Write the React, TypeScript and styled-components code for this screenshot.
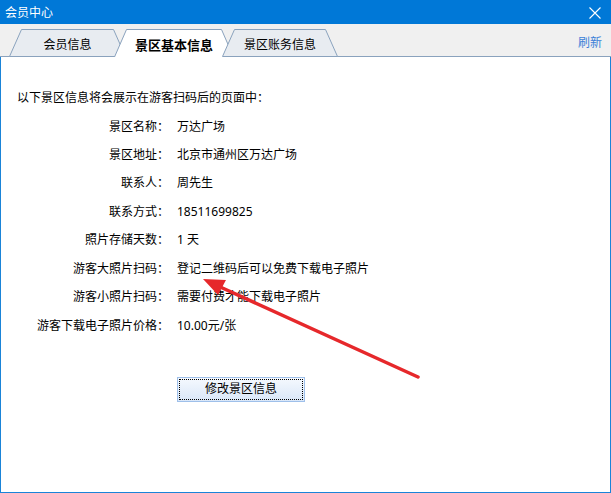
import React from "react";
import styled, { createGlobalStyle } from "styled-components";

const FONT = `"Noto Sans", "Noto Sans CJK SC", sans-serif`;

const Global = createGlobalStyle`
  html, body { margin: 0; padding: 0; background: #fff; }
  body { font-family: ${FONT}; }
`;

const Window = styled.div`
  position: relative;
  width: 611px;
  height: 493px;
  display: flex;
  flex-direction: column;
  font-family: ${FONT};
  font-size: 12px;
  color: #000;
  overflow: hidden;
`;

const TitleBar = styled.div`
  flex: none;
  height: 24px;
  background: #0078d7;
  display: flex;
  align-items: center;
  justify-content: space-between;
  padding: 0 10px 0 5px;
  color: #fff;
`;

const Title = styled.span`
  font-size: 12px;
  line-height: 16px;
  padding-top: 1px;
`;

const CloseIcon = styled.svg`
  display: block;
  width: 12px;
  height: 12px;
  margin-top: 2px;
`;

const TabStrip = styled.div`
  flex: none;
  box-sizing: border-box;
  height: 33px;
  background: #f0f0f0;
  border-bottom: 1px solid #8aa2bd;
  display: flex;
  align-items: flex-end;
  padding: 0 9px 0 9px;
`;

const TabItem = styled.div<{ $active?: boolean; $w: number }>`
  position: relative;
  box-sizing: border-box;
  width: ${(p) => p.$w}px;
  height: 28px;
  margin-bottom: -1px;
  margin-left: -12px;
  &:first-child {
    margin-left: 0;
  }
  display: flex;
  align-items: center;
  justify-content: center;
  padding-top: 3px;
  font-size: ${(p) => (p.$active ? 13 : 12)}px;
  font-weight: ${(p) => (p.$active ? 700 : 400)};
  color: #000;
`;

const TabShape = styled.svg`
  position: absolute;
  left: 0;
  top: 0;
`;

const TabLabel = styled.span`
  position: relative;
  line-height: 16px;
`;

const RefreshLink = styled.span`
  margin-left: auto;
  align-self: center;
  padding-top: 5px;
  color: #3b7fd8;
  font-size: 12px;
  line-height: 16px;
  cursor: pointer;
`;

const Panel = styled.div`
  flex: 1;
  background: #fff;
  border: 1px solid #1a84d8;
  border-top: none;
  padding: 27px 0 0 16px;
`;

const InfoGrid = styled.div`
  display: grid;
  grid-template-columns: 152px auto;
  column-gap: 8px;
  grid-auto-rows: 28.43px;
  align-items: center;
  line-height: 16px;
`;

const Intro = styled.div`
  grid-column: 1 / span 2;
`;

const Label = styled.div`
  text-align: right;
  white-space: nowrap;
`;

const Value = styled.div`
  white-space: nowrap;
`;

const ButtonRow = styled.div`
  margin-top: 37px;
  padding-left: 160px;
`;

const ActionButton = styled.button`
  box-sizing: border-box;
  width: 128px;
  height: 25px;
  border: 1px solid #9fc0ea;
  border-radius: 0;
  background: linear-gradient(#f5f9fe, #dae7f8);
  outline: 1px dotted #000;
  outline-offset: -3px;
  font-family: ${FONT};
  font-size: 12px;
  color: #000;
  padding: 0;
  line-height: 16px;
`;

const ArrowOverlay = styled.svg`
  position: absolute;
  left: 0;
  top: 0;
  pointer-events: none;
`;

type TabDef = { label: string; w: number; active?: boolean };

const tabs: TabDef[] = [
  { label: "会员信息", w: 117 },
  { label: "景区基本信息", w: 120, active: true },
  { label: "景区账务信息", w: 116 },
];

function Tab({ label, w, active }: TabDef) {
  const h = 28;
  return (
    <TabItem $active={active} $w={w}>
      <TabShape width={w} height={h} viewBox={`0 0 ${w} ${h}`}>
        {active ? (
          <>
            <path d={`M0.5,${h} L12.5,0.5 L${w - 12.5},0.5 L${w - 0.5},${h} Z`} fill="#fff" />
            <path
              d={`M0.5,${h} L12.5,0.5 L${w - 12.5},0.5 L${w - 0.5},${h}`}
              fill="none"
              stroke="#8aa2bd"
              strokeWidth={1}
            />
          </>
        ) : (
          <path
            d={`M0.5,${h - 0.5} L12.5,0.5 L${w - 12.5},0.5 L${w - 0.5},${h - 0.5} Z`}
            fill="#e8ecf1"
            stroke="#8aa2bd"
            strokeWidth={1}
          />
        )}
      </TabShape>
      <TabLabel>{label}</TabLabel>
    </TabItem>
  );
}

const rows: [string, string][] = [
  ["景区名称：", "万达广场"],
  ["景区地址：", "北京市通州区万达广场"],
  ["联系人：", "周先生"],
  ["联系方式：", "18511699825"],
  ["照片存储天数：", "1 天"],
  ["游客大照片扫码：", "登记二维码后可以免费下载电子照片"],
  ["游客小照片扫码：", "需要付费才能下载电子照片"],
  ["游客下载电子照片价格：", "10.00元/张"],
];

export default function App() {
  return (
    <>
      <Global />
      <Window>
        <TitleBar>
          <Title>会员中心</Title>
          <CloseIcon viewBox="0 0 12 12">
            <path d="M0.5,0.5 L11.5,11.5 M11.5,0.5 L0.5,11.5" stroke="#fff" strokeWidth={1.1} fill="none" />
          </CloseIcon>
        </TitleBar>
        <TabStrip>
          {tabs.map((t) => (
            <Tab key={t.label} {...t} />
          ))}
          <RefreshLink>刷新</RefreshLink>
        </TabStrip>
        <Panel>
          <InfoGrid>
            <Intro>以下景区信息将会展示在游客扫码后的页面中：</Intro>
            {rows.map(([l, v]) => (
              <React.Fragment key={l}>
                <Label>{l}</Label>
                <Value>{v}</Value>
              </React.Fragment>
            ))}
          </InfoGrid>
          <ButtonRow>
            <ActionButton>修改景区信息</ActionButton>
          </ButtonRow>
        </Panel>
        <ArrowOverlay width={611} height={493} viewBox="0 0 611 493">
          <line x1={418} y1={377} x2={218} y2={286} stroke="#e6282b" strokeWidth={3.5} strokeLinecap="round" />
          <polygon points="203,279 226,280 218,295" fill="#e6282b" />
        </ArrowOverlay>
      </Window>
    </>
  );
}
